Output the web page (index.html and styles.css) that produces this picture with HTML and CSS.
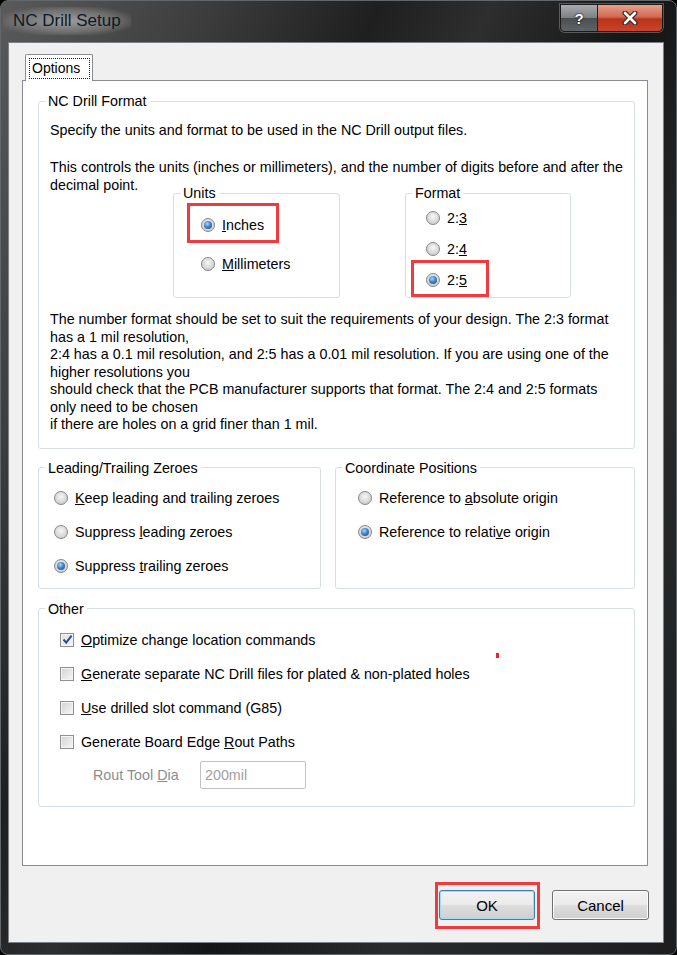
FILE: index.html
```html
<!DOCTYPE html>
<html lang="en">
<head>
  <meta charset="UTF-8" />
  <title>NC Drill Setup</title>
  <link rel="stylesheet" href="styles.css">
</head>
<body>

<div class="window">
  <div class="titlebar">
    <span class="title">NC Drill Setup</span>
    <div class="caption-btns">
      <span class="cbtn help">?</span>
      <span class="cbtn close">
        <svg width="18" height="14" viewBox="0 0 18 14">
          <path d="M4 2 L14 12 M14 2 L4 12" stroke="#3a2a26" stroke-width="5" stroke-linecap="round"/>
          <path d="M4 2 L14 12 M14 2 L4 12" stroke="#fff" stroke-width="2.6" stroke-linecap="round"/>
        </svg>
      </span>
    </div>
  </div>

  <div class="client">
    <div class="tabs">
      <span class="tab"><span class="focus">Options</span></span>
    </div>

    <div class="panel">
      <fieldset class="group drill">
        <legend>NC Drill Format</legend>
        <p class="intro">Specify the units and format to be used in the NC Drill output files.</p>
        <p class="intro2">This controls the units (inches or millimeters), and the number of digits before and after the</p>
        <div class="unit-row">
          <p class="lead">decimal point.</p>
          <fieldset class="group units">
            <legend>Units</legend>
            <div class="opt"><span class="radio on"></span><span><u>I</u>nches</span><span class="mark mark-inch"></span></div>
            <div class="opt"><span class="radio"></span><span><u>M</u>illimeters</span></div>
          </fieldset>
          <fieldset class="group format">
            <legend>Format</legend>
            <div class="opt"><span class="radio"></span><span>2:<u>3</u></span></div>
            <div class="opt"><span class="radio"></span><span>2:<u>4</u></span></div>
            <div class="opt"><span class="radio on"></span><span>2:<u>5</u></span><span class="mark mark-fmt"></span></div>
          </fieldset>
        </div>
        <p class="note">The number format should be set to suit the requirements of your design. The 2:3 format<br>has a 1 mil resolution,<br>2:4 has a 0.1 mil resolution, and 2:5 has a 0.01 mil resolution. If you are using one of the<br>higher resolutions you<br>should check that the PCB manufacturer supports that format. The 2:4 and 2:5 formats<br>only need to be chosen<br>if there are holes on a grid finer than 1 mil.</p>
      </fieldset>

      <div class="pair">
        <fieldset class="group zeroes">
          <legend>Leading/Trailing Zeroes</legend>
          <div class="opt"><span class="radio"></span><span><u>K</u>eep leading and trailing zeroes</span></div>
          <div class="opt"><span class="radio"></span><span>Suppress <u>l</u>eading zeroes</span></div>
          <div class="opt"><span class="radio on"></span><span>Suppress <u>t</u>railing zeroes</span></div>
        </fieldset>
        <fieldset class="group coords">
          <legend>Coordinate Positions</legend>
          <div class="opt"><span class="radio"></span><span>Reference to <u>a</u>bsolute origin</span></div>
          <div class="opt"><span class="radio on"></span><span>Reference to relati<u>v</u>e origin</span></div>
        </fieldset>
      </div>

      <fieldset class="group other">
        <legend>Other</legend>
        <div class="opt"><span class="check on"><svg width="11" height="11" viewBox="0 0 11 11"><path d="M1.5 5.5 L4.2 8.6 L9.6 1.6" fill="none" stroke="#2b4f96" stroke-width="2"/></svg></span><span><u>O</u>ptimize change location commands</span></div>
        <div class="opt"><span class="check"></span><span><u>G</u>enerate separate NC Drill files for plated &amp; non-plated holes</span></div>
        <div class="opt"><span class="check"></span><span><u>U</u>se drilled slot command (G85)</span></div>
        <div class="opt"><span class="check"></span><span>Generate Board Edge <u>R</u>out Paths</span></div>
        <div class="rout">
          <span class="rout-label">Rout Tool <u>D</u>ia</span>
          <span class="field">200mil</span>
        </div>
        <span class="speck"></span>
      </fieldset>
    </div>

    <div class="actions">
      <span class="ok-wrap"><button class="btn default">OK</button><span class="mark mark-ok"></span></span>
      <button class="btn cancel">Cancel</button>
    </div>
  </div>
</div>

</body>
</html>
```

FILE: styles.css
```css
* {
  box-sizing: border-box;
}

body {
  margin: 0;
  background: #000;
  font-family: "Liberation Sans", Arial, sans-serif;
  font-size: 14.3px;
  color: #000;
}

.window {
  width: 677px;
  height: 955px;
  display: flex;
  flex-direction: column;
  border: 1px solid #62676c;
  border-radius: 8px;
  background: linear-gradient(115deg, #5a5a5a 0%, #3e3e3e 18%, #1f1f1f 34%, #2e2e2e 44%, #151515 58%, #2b2b2b 74%, #1b1d1f 100%);
  overflow: hidden;
}

.titlebar {
  height: 41px;
  display: flex;
  justify-content: space-between;
  align-items: flex-start;
}

.title {
  margin: 6px 0 0 2px;
  padding: 4px 10px;
  font-size: 17px;
  line-height: 20px;
  color: #0e1a28;
  background: radial-gradient(ellipse at center, rgba(190,190,190,0.7) 0%, rgba(150,150,150,0.45) 55%, rgba(120,120,120,0) 80%);
}

.caption-btns {
  display: flex;
  margin: 3px 13px 0 0;
  border: 1px solid #1a1a1a;
  border-radius: 0 0 5px 5px;
  box-shadow: 0 0 0 1px rgba(200,200,200,0.35);
  overflow: hidden;
}

.cbtn {
  height: 26px;
  display: flex;
  align-items: center;
  justify-content: center;
}

.help {
  width: 37px;
  background: linear-gradient(#a9acae 0%, #7d8184 48%, #4a4f53 52%, #5f6468 100%);
  border-right: 1px solid #202020;
  color: #fff;
  font-weight: bold;
  font-size: 15px;
  text-shadow: 0 0 2px #000, 0 0 1px #000;
}

.close {
  width: 64px;
  background: linear-gradient(#e8a08a 0%, #d26a52 45%, #b93219 55%, #c9442a 100%);
}

.client {
  flex: 1;
  margin: 0 12px 11px 7px;
  border: 1px solid #7b8186;
  background: #f0f0f0;
  display: flex;
  flex-direction: column;
}

.tabs {
  padding: 11px 0 0 16px;
  display: flex;
}

.tab {
  width: 68px;
  height: 27px;
  margin-bottom: -1px;
  position: relative;
  z-index: 1;
  background: #fff;
  border: 1px solid #898c95;
  border-bottom: none;
  border-radius: 2px 2px 0 0;
  padding: 3px 2px 0 3px;
}

.focus {
  display: block;
  border: 1px dotted #222;
  line-height: 19px;
  padding-left: 2px;
  font-size: 14px;
}

.panel {
  height: 786px;
  margin: 0 15px 0 13px;
  background: #fff;
  border: 1px solid #898c95;
  padding-right: 12px;
}

/* legend sits 10px in from the box edge whatever the padding */
.group {
  --pl: 0px;
  margin: 0;
  padding: 0 0 0 var(--pl);
  border: 1px solid #d5dfe5;
  border-radius: 3px;
  min-width: 0;
}

.group legend {
  margin-left: calc(6px - var(--pl));
  padding: 0 3px;
  line-height: 16px;
}

p {
  margin: 0;
  line-height: 18px;
  white-space: nowrap;
}

.drill {
  --pl: 11px;
  margin: 12px 0 0 15px;
  padding-bottom: 14px;
}

.intro {
  margin-top: 12px;
}

.intro2 {
  margin-top: 19px;
}

.unit-row {
  display: flex;
  align-items: flex-start;
}

.lead {
  width: 123px;
}

.opt {
  display: flex;
  align-items: center;
  gap: 7px;
  height: 20px;
  position: relative;
  white-space: nowrap;
}

.units {
  --pl: 27px;
  width: 167px;
  margin-top: 9px;
  padding-top: 14px;
  padding-bottom: 23px;
  display: flex;
  flex-direction: column;
  gap: 19px;
}

.format {
  --pl: 20px;
  width: 166px;
  margin: 9px 0 0 65px;
  padding-top: 7px;
  padding-bottom: 7px;
  display: flex;
  flex-direction: column;
  gap: 11px;
}

.note {
  margin-top: 13px;
  line-height: 17.5px;
}

.pair {
  display: flex;
  gap: 14px;
  margin: 11px 0 0 15px;
}

.zeroes,
.coords {
  display: flex;
  flex-direction: column;
  gap: 14px;
  padding-top: 12px;
  padding-bottom: 12px;
}

.zeroes {
  --pl: 15px;
  width: 283px;
}

.coords {
  --pl: 22px;
  flex: 1;
}

.other {
  --pl: 21px;
  position: relative;
  margin: 12px 0 0 15px;
  padding-top: 13px;
  padding-bottom: 17px;
  display: flex;
  flex-direction: column;
  gap: 14px;
}

.radio {
  width: 14px;
  height: 14px;
  flex: none;
  border-radius: 50%;
  border: 1px solid #878787;
  background: radial-gradient(circle at 50% 40%, #f6f6f6 0%, #dadada 55%, #bdbdbd 100%);
  position: relative;
}

.radio.on::after {
  content: "";
  position: absolute;
  inset: 2px;
  border-radius: 50%;
  background: radial-gradient(circle at 40% 35%, #a8d6fb 0%, #3f86cc 45%, #163f78 100%);
}

.check {
  width: 14px;
  height: 14px;
  flex: none;
  border: 1px solid #8e8f8f;
  background: linear-gradient(135deg, #d2d2d2 0%, #e8e8e8 60%, #f8f8f8 100%);
  box-shadow: inset 0 0 0 1px #f4f4f4;
  display: flex;
  align-items: center;
  justify-content: center;
}

.check.on {
  background: linear-gradient(135deg, #e2e2e2 0%, #f4f4f4 100%);
}

.rout {
  display: flex;
  align-items: center;
  margin-top: -5px;
  padding-left: 33px;
  color: #8d8d8d;
}

.rout-label {
  width: 107px;
}

.field {
  width: 106px;
  height: 28px;
  border: 1px solid #c2c2c2;
  border-radius: 2px;
  padding: 5px 0 0 4px;
  color: #a0a0a0;
  background: #fff;
}

.speck {
  position: absolute;
  left: 457px;
  top: 36px;
  width: 3px;
  height: 5px;
  background: #e8262b;
}

.mark {
  position: absolute;
  border: 3px solid #ef3b3f;
}

.mark-inch {
  left: -14px;
  top: -12px;
  width: 92px;
  height: 40px;
}

.mark-fmt {
  left: -15px;
  top: -10px;
  width: 78px;
  height: 37px;
}

.actions {
  display: flex;
  justify-content: flex-end;
  gap: 17px;
  padding: 24px 14px 0 0;
}

.ok-wrap {
  position: relative;
  display: flex;
}

.mark-ok {
  left: -4px;
  right: -5px;
  top: -8px;
  bottom: -9px;
}

.btn {
  height: 30px;
  font-family: "Liberation Sans", Arial, sans-serif;
  font-size: 15px;
  color: #000;
  border: 1px solid #707070;
  border-radius: 3px;
  background: linear-gradient(#f2f2f2 0%, #ebebeb 48%, #dddddd 52%, #cfcfcf 100%);
  box-shadow: inset 0 0 0 1px #fcfcfc;
}

.default {
  width: 96px;
  border-color: #3c7fb1;
  box-shadow: inset 0 0 0 1px #9fdcf8;
}

.cancel {
  width: 97px;
}
```
